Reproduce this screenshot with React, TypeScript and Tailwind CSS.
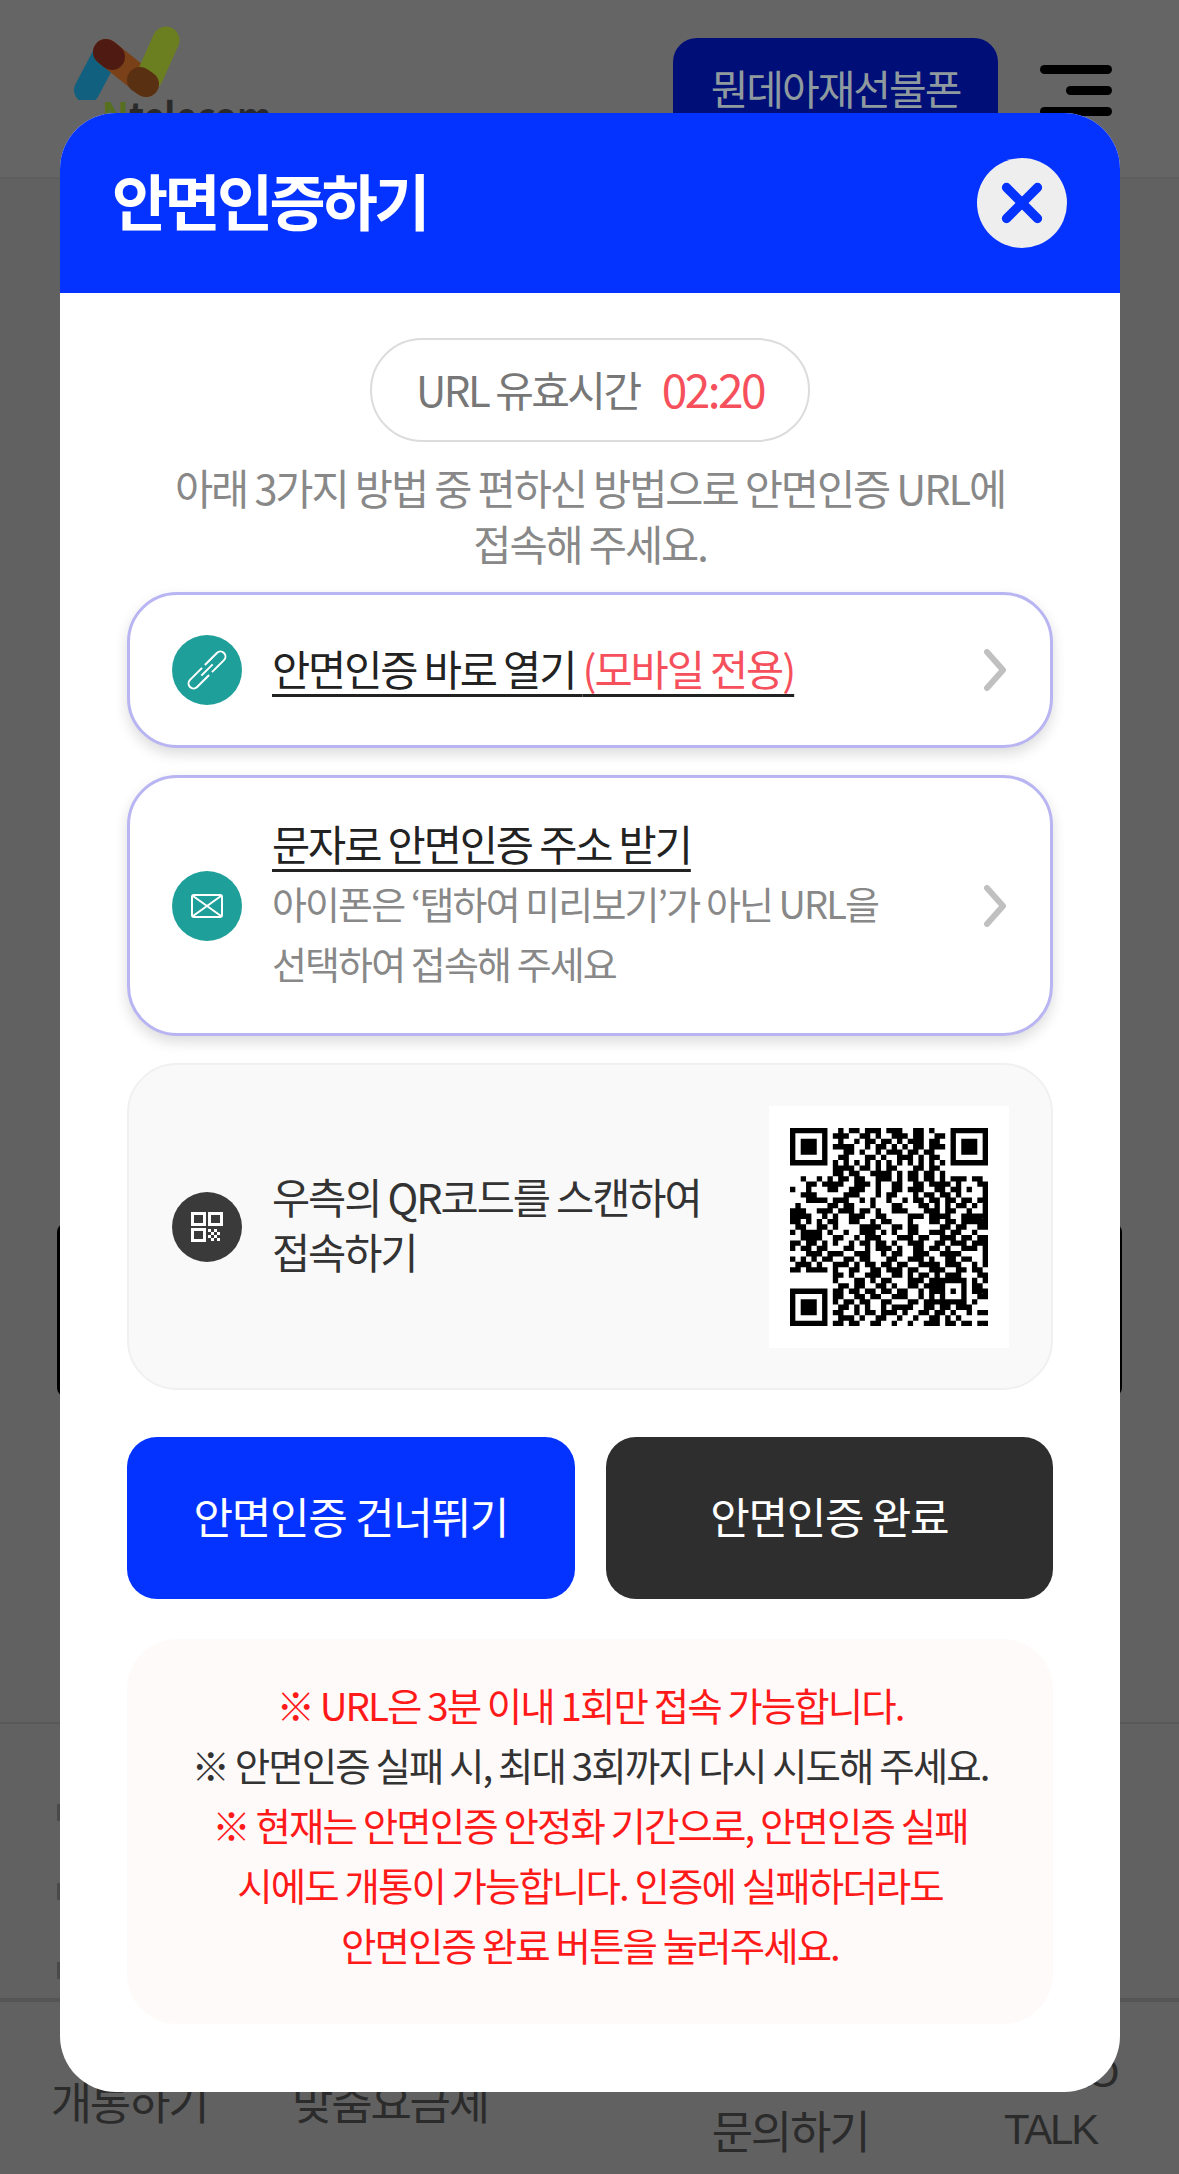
import React from 'react';
import { X } from 'lucide-react';

const QR_ROWS = [
  '0000000001011011101110011010000000000',
  '0000000011100110100111011001100000000',
  '0000000001001011011010111011000000000',
  '0000000011110010110101011011100000000',
  '0000000000110100101110110110000000000',
  '0000000001100011010011101011000000000',
  '0000000010101010101010101010100000000',
  '0000000011110110101100011011000000000',
  '0000000011011001111010110110100000000',
  '0010010101101100111010110110101110110',
  '0001101111001110100110011011110100011',
  '1001000110011100100110111001101101001',
  '0011100000111000101100010110110100001',
  '0001111011100101001001011011011011011',
  '0100000110110001000110001101010110101',
  '1110011101110110100111000111011001001',
  '1111001010011100110000111011110011111',
  '1101010110011001011000100011011011111',
  '0110011010000111100110110000110110011',
  '1011110100100111010100110011101100100',
  '0011110011001011100011101100111011011',
  '1101101010010110110100111001101110111',
  '1011011000110010111010011011010011101',
  '0001110111001110010110011100111100001',
  '1010101100110110001100111010011011001',
  '0111010011101011011011001111011100101',
  '1101111010011001101110110011100110110',
  '0000000011010011100110101101011100011',
  '0000000010001101011000111011000000101',
  '0000000001101100110100110111000000110',
  '0000000011011011011011001011000000111',
  '0000000011001101100111001010100000011',
  '0000000010110110011000110111000000100',
  '0000000001101010010111100110110111000',
  '0000000011001011011101001101101001011',
  '0000000001110100110010010011010100000',
  '0000000011011001100100100111011011011',
];

const inFinder = (fx: number, fy: number, x: number, y: number) => {
  const dx = x - fx;
  const dy = y - fy;
  if (dx < 0 || dy < 0 || dx > 6 || dy > 6) return false;
  return dx === 0 || dy === 0 || dx === 6 || dy === 6 || (dx >= 2 && dx <= 4 && dy >= 2 && dy <= 4);
};

const qrPath = () => {
  let d = '';
  for (let y = 0; y < 37; y++) {
    for (let x = 0; x < 37; x++) {
      const data = QR_ROWS[y].charAt(x) === '1';
      const dx = Math.abs(x - 30);
      const dy = Math.abs(y - 30);
      const inAlign = dx <= 2 && dy <= 2;
      const align = Math.max(dx, dy) !== 1;
      const on =
        inFinder(0, 0, x, y) || inFinder(30, 0, x, y) || inFinder(0, 30, x, y) || (inAlign ? align : data);
      if (on) d += `M${x} ${y}h1v1h-1z`;
    }
  }
  return d;
};

const Chevron = () => (
  <svg width="24" height="42" viewBox="0 0 24 42" fill="none" className="shrink-0">
    <path d="M4 3 L20 21 L4 39" stroke="#c0c0c0" strokeWidth="6" strokeLinecap="round" strokeLinejoin="round" />
  </svg>
);

const IconCircle = ({ dark, children }: { dark?: boolean; children: React.ReactNode }) => (
  <div className={`h-[70px] w-[70px] shrink-0 rounded-full flex items-center justify-center ${dark ? 'bg-[#3a3a3a]' : 'bg-[#1f9f9a]'}`}>
    {children}
  </div>
);

const Backdrop = () => (
  <div className="h-[2174px] bg-[#616161] overflow-hidden">
    <div className="h-[179px] bg-[#656565] border-b-2 border-[#5e5e5e] flex justify-between">
      <div className="pl-[68px] pt-[24px]">
        <svg width="112" height="76" viewBox="0 0 112 76" fill="none">
          <path d="M19 66 L38 30" stroke="#12607f" strokeWidth="26" strokeLinecap="round" />
          <path d="M38 28 L78 60" stroke="#7a4018" strokeWidth="26" strokeLinecap="round" />
          <path d="M82 52 L98 16" stroke="#6c7f20" strokeWidth="27" strokeLinecap="round" />
          <path d="M38 28 L44 33" stroke="#4f1a12" strokeWidth="26" strokeLinecap="round" />
          <path d="M72 56 L78 60" stroke="#5a3012" strokeWidth="26" strokeLinecap="round" />
        </svg>
        <div className="-mt-[6px] ml-[34px] text-[36px] leading-[38px] font-bold text-[#2a2a2a]">
          <span className="text-[#56701f]">N</span>telecom
        </div>
      </div>
      <div className="flex pr-[67px]">
        <div className="mt-[38px] h-[110px] w-[325px] rounded-[24px] bg-[#000f78] pt-[24px] text-center text-[41px] leading-[50px] tracking-[-0.05em] text-[#8f9a9f]">
          뭔데아재선불폰
        </div>
        <div className="ml-[42px] mt-[65px] flex w-[72px] flex-col items-end gap-[12px]">
          <div className="h-[9px] w-[72px] rounded-full bg-black" />
          <div className="h-[9px] w-[46px] rounded-full bg-black" />
          <div className="h-[9px] w-[72px] rounded-full bg-black" />
        </div>
      </div>
    </div>
    <div className="mx-[57px] mt-[1045px] h-[172px] rounded-[8px] bg-black" />
    <div className="mt-[326px] h-[2px] bg-[#585858]" />
    <div className="h-[274px] pl-[57px] pt-[80px] flex flex-col gap-[62px]">
      <div className="h-[17px] w-[3px] bg-[#4a4a4a]" />
      <div className="h-[17px] w-[3px] bg-[#4a4a4a]" />
      <div className="h-[17px] w-[3px] bg-[#4a4a4a]" />
    </div>
    <div className="h-[4px] bg-[#555555]" />
    <div className="grid grid-cols-[258px_264px_136px_264px_1fr] text-center text-[45px] leading-[57px] tracking-[-0.05em] text-[#2b2b2b]">
      <div className="pt-[70px]">개통하기</div>
      <div className="pt-[70px]">맞춤요금제</div>
      <div />
      <div className="pt-[99px]">문의하기</div>
      <div className="pt-[42px] font-['Liberation_Sans',sans-serif] text-[42px]">
        KAKAO
        <br />
        TALK
      </div>
    </div>
  </div>
);

export default function App() {
  return (
    <div className="relative h-[2174px] overflow-hidden font-['Noto_Sans_CJK_KR','Liberation_Sans',sans-serif]">
      <Backdrop />

      <div className="absolute left-[60px] top-[113px] h-[1979px] w-[1060px] overflow-hidden rounded-[56px] bg-white">
        <div className="flex h-[180px] items-center justify-between bg-[#0433ff] pl-[52px] pr-[53px]">
          <h1 className="pb-[8px] text-[61px] font-bold leading-none tracking-[-0.06em] text-white">안면인증하기</h1>
          <button className="flex h-[90px] w-[90px] items-center justify-center rounded-full bg-[#eeeeee]">
            <X size={62} strokeWidth={3.6} color="#0433ff" />
          </button>
        </div>

        <div className="px-[67px] pt-[45px]">
          <div className="mx-auto flex h-[104px] w-[440px] items-center justify-center gap-[22px] rounded-full border-2 border-[#dcdcdc] pb-[4px] text-[42px] tracking-[-0.06em]">
            <span className="text-[#777777]">URL 유효시간</span>
            <span className="text-[46px] leading-none text-[#f6505c]">02:20</span>
          </div>

          <p className="mt-[17px] text-center text-[41.5px] leading-[56px] tracking-[-0.05em] text-[#888888]">
            아래 3가지 방법 중 편하신 방법으로 안면인증 URL에
            <br />
            접속해 주세요.
          </p>

          <div className="mt-[21px] flex h-[156px] items-center rounded-[50px] border-[3px] border-[#b8b5f2] bg-white pl-[42px] pr-[43px] shadow-[0_6px_14px_rgba(0,0,0,0.14)]">
            <IconCircle>
              <svg width="36" height="36" viewBox="0 0 36 36" fill="none" stroke="white" strokeWidth="2" className="overflow-visible">
                <g transform="rotate(45 18 18)">
                  <path d="M13 16 V-1 a5 5 0 0 1 10 0 V16" />
                  <path d="M13 20 V37 a5 5 0 0 0 10 0 V20" />
                  <path d="M18 10 V26" />
                </g>
              </svg>
            </IconCircle>
            <div className="ml-[30px] flex-1 pb-[4px] text-[41.5px] tracking-[-0.05em] text-[#222222] underline decoration-[#222222] decoration-[3px] underline-offset-[8px]">
              안면인증 바로 열기 <span className="text-[#f6505c]">(모바일 전용)</span>
            </div>
            <Chevron />
          </div>

          <div className="mt-[27px] flex h-[261px] items-center rounded-[50px] border-[3px] border-[#b8b5f2] bg-white pl-[42px] pr-[43px] shadow-[0_6px_14px_rgba(0,0,0,0.14)]">
            <IconCircle>
              <svg width="32" height="24" viewBox="0 0 32 24" fill="none" stroke="white" strokeWidth="2">
                <rect x="1" y="1" width="30" height="22" rx="2" />
                <path d="M2 2 L30 22 M30 2 L2 22" />
              </svg>
            </IconCircle>
            <div className="ml-[30px] flex-1 pb-[5px]">
              <div className="text-[41.5px] leading-[60px] tracking-[-0.05em] text-[#222222] underline decoration-[3px] underline-offset-[8px]">
                문자로 안면인증 주소 받기
              </div>
              <div className="text-[38px] leading-[60px] tracking-[-0.05em] text-[#888888]">
                아이폰은 ‘탭하여 미리보기’가 아닌 URL을
                <br />
                선택하여 접속해 주세요
              </div>
            </div>
            <Chevron />
          </div>

          <div className="mt-[27px] flex h-[327px] items-center rounded-[50px] border-2 border-[#f0f0f0] bg-[#f9f9f9] pl-[43px] pr-[42px]">
            <IconCircle dark>
              <svg width="32" height="30" viewBox="0 0 32 30" fill="none" stroke="white" strokeWidth="3">
                <rect x="1.5" y="1.5" width="12" height="11" />
                <rect x="18.5" y="1.5" width="12" height="11" />
                <rect x="1.5" y="17.5" width="12" height="11" />
                <path d="M17 17h3v3h-3zM23 17h3v3h-3zM20 20h3v3h-3zM26 20h3v3h-3zM17 23h3v3h-3zM23 23h3v3h-3zM20 26h3v3h-3zM26 26h3v3h-3z" fill="white" stroke="none" />
              </svg>
            </IconCircle>
            <div className="ml-[30px] flex-1 pb-[5px] text-[41.5px] leading-[55px] tracking-[-0.05em] text-[#333333]">
              우측의 QR코드를 스캔하여
              <br />
              접속하기
            </div>
            <div className="flex h-[242px] w-[240px] shrink-0 items-center justify-center bg-white">
              <svg width="198" height="198" viewBox="0 0 37 37" fill="black">
                <path d={qrPath()} />
              </svg>
            </div>
          </div>

          <div className="mt-[47px] flex gap-[31px]">
            <button className="h-[162px] flex-1 rounded-[30px] bg-[#0433ff] pb-[5px] text-[43px] tracking-[-0.03em] text-white">
              안면인증 건너뛰기
            </button>
            <button className="h-[162px] flex-1 rounded-[30px] bg-[#2e2e2e] pb-[5px] text-[43px] tracking-[-0.03em] text-white">
              안면인증 완료
            </button>
          </div>

          <div className="mt-[40px] h-[385px] rounded-[50px] bg-[#fffafa] pt-[35px] text-center text-[38.5px] leading-[60px] tracking-[-0.05em] text-[#ff1a1a]">
            <div>※ URL은 3분 이내 1회만 접속 가능합니다.</div>
            <div className="text-[#333333]">※ 안면인증 실패 시, 최대 3회까지 다시 시도해 주세요.</div>
            <div>※ 현재는 안면인증 안정화 기간으로, 안면인증 실패</div>
            <div>시에도 개통이 가능합니다. 인증에 실패하더라도</div>
            <div>안면인증 완료 버튼을 눌러주세요.</div>
          </div>
        </div>
      </div>
    </div>
  );
}
